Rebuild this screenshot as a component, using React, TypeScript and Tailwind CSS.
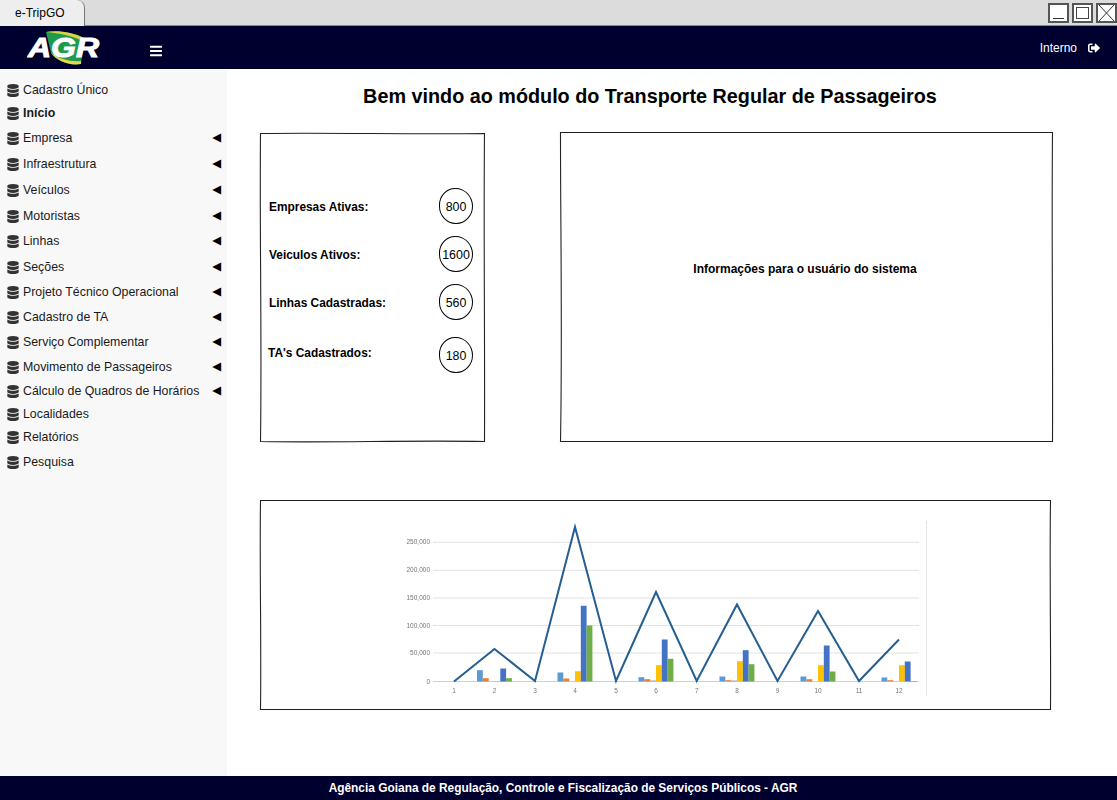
import { FaBars, FaDatabase, FaSignOutAlt } from 'react-icons/fa';

const menuItems = [
    { label: 'Cadastro Único', row: 'h-[22px]' },
    { label: 'Início', row: 'h-[24px] font-bold' },
    { label: 'Empresa', row: 'h-[26px]', arrow: true },
    { label: 'Infraestrutura', row: 'h-[26px]', arrow: true },
    { label: 'Veículos', row: 'h-[26px]', arrow: true },
    { label: 'Motoristas', row: 'h-[26px]', arrow: true },
    { label: 'Linhas', row: 'h-[24px]', arrow: true },
    { label: 'Seções', row: 'h-[28px]', arrow: true },
    { label: 'Projeto Técnico Operacional', row: 'h-[22px]', arrow: true },
    { label: 'Cadastro de TA', row: 'h-[28px]', arrow: true },
    { label: 'Serviço Complementar', row: 'h-[22px]', arrow: true },
    { label: 'Movimento de Passageiros', row: 'h-[28px]', arrow: true },
    { label: 'Cálculo de Quadros de Horários', row: 'h-[20px]', arrow: true },
    { label: 'Localidades', row: 'h-[26px]' },
    { label: 'Relatórios', row: 'h-[20px]' },
    { label: 'Pesquisa', row: 'h-[30px]' },
];

const stats = [
    { label: 'Empresas Ativas:', value: '800', row: 'mt-0 pl-[9px]', text: 'mt-[3px]' },
    { label: 'Veiculos Ativos:', value: '1600', row: 'mt-[12px] pl-[9px]', text: 'mt-[3px]' },
    { label: 'Linhas Cadastradas:', value: '560', row: 'mt-[12px] pl-[9px]', text: 'mt-[3px]' },
    { label: "TA's Cadastrados:", value: '180', row: 'mt-[17px] pl-[8px]', text: '-mt-[2px]' },
];

const seriesColors = ['#5b9bd5', '#ed7d31', '#a5a5a5', '#ffc000', '#4472c4', '#70ad47'];
const seriesOffsets = [-17.5, -11.6, -5.8, 0, 5.8, 11.6];

// bar heights in px per month, same order as seriesColors
const bars = [
    { x: 494.5, h: [11.3, 3.3, 0, 0.5, 13, 3.3] },
    { x: 575, h: [9, 3, 0, 10.3, 75.7, 56] },
    { x: 656, h: [4.3, 2.3, 1, 16.3, 42, 22.7] },
    { x: 737, h: [5, 1.3, 1, 20.3, 31.3, 17.3] },
    { x: 818, h: [5, 2.3, 0, 16.3, 36, 10] },
    { x: 899, h: [4, 1.3, 0, 16.3, 20, 0.5] },
];

const months = [454, 494.5, 535, 575, 616, 656, 696.7, 737, 777.5, 818, 859, 899];
const ticks = [
    { y: 542.3, label: '250,000' },
    { y: 570.3, label: '200,000' },
    { y: 598, label: '150,000' },
    { y: 625.5, label: '100,000' },
    { y: 653, label: '50,000' },
    { y: 681.5, label: '0' },
];
const linePoints = '454,681.5 494.5,649 535,681 575,527 616,681 656,592 696.7,681 737,604.5 777.5,681 818,611 859,681 899,639.5';

function SketchBorder({ d }: { d: string }) {
    return (
        <svg className="absolute inset-0 w-full h-full pointer-events-none overflow-visible" fill="none">
            <path d={d} stroke="#222" strokeWidth="1.1" />
        </svg>
    );
}

function Logo() {
    return (
        <svg width="76" height="38" viewBox="0 0 76 38" className="ml-[27px] mt-[1px]">
            <path d="M19 3 C30 1 46 3 57 9 L54 35 C42 37 30 32 24 24 Z" fill="#1f9a4c" />
            <path d="M19 3 C30 1 46 3 57 9 L56 12 C46 7 32 4 19 3 Z" fill="#d8d24a" />
            <path d="M24 24 C30 32 42 37 54 35 L54 32 C44 33 32 30 24 24 Z" fill="#e6d84a" />
            <text x="1" y="28" fontFamily="'Liberation Sans', sans-serif" fontSize="27" fontWeight="700" fontStyle="italic" fill="#fff" stroke="#fff" strokeWidth="1" textLength="71" lengthAdjust="spacingAndGlyphs">AGR</text>
        </svg>
    );
}

function Chart() {
    return (
        <svg width="540" height="190" viewBox="395 515 540 190" className="blur-[0.3px]">
            <line x1="926.5" y1="521" x2="926.5" y2="696" stroke="#e4e4e4" />
            {ticks.map((t) => (
                <g key={t.label}>
                    <line x1="433" y1={t.y} x2="919" y2={t.y} stroke={t.label === '0' ? '#d0d0d0' : '#e2e2e2'} />
                    <text x="430" y={t.y + 2} textAnchor="end" fontSize="6.5" fill="#777" fontFamily="'Liberation Sans', sans-serif">{t.label}</text>
                </g>
            ))}
            {months.map((x, i) => (
                <text key={x} x={x} y="692.5" textAnchor="middle" fontSize="6.5" fill="#777" fontFamily="'Liberation Sans', sans-serif">{i + 1}</text>
            ))}
            {bars.map((m) =>
                m.h.map((h, i) => (
                    <rect key={`${m.x}-${i}`} x={m.x + seriesOffsets[i]} y={681.5 - h} width="5.8" height={h} fill={seriesColors[i]} />
                ))
            )}
            <polyline points={linePoints} fill="none" stroke="#255e91" strokeWidth="2" />
        </svg>
    );
}

export default function App() {
    return (
        <div className="w-[1117px] h-[800px] flex flex-col bg-white overflow-hidden font-['Liberation_Sans',Arial,sans-serif] text-black">
            {/* window title bar */}
            <div className="h-[26px] shrink-0 flex justify-between bg-[#dcdcdc] border-b border-[#8a8a8a]">
                <div className="w-[85px] h-[26px] bg-[#eeeeee] border-r border-[#777] rounded-tr-[8px] text-[12px] leading-[27px] pl-[15px]">e-TripGO</div>
                <div className="flex gap-[3px] pt-[3px]">
                    <button className="w-[21px] h-[20px] bg-white border-2 border-[#555] flex items-center justify-center">
                        <span className="w-[11px] h-[1px] bg-[#333] mt-[11px]" />
                    </button>
                    <button className="w-[21px] h-[20px] bg-white border-2 border-[#555] flex items-center justify-center">
                        <span className="w-[13px] h-[12px] border border-[#444]" />
                    </button>
                    <button className="w-[21px] h-[20px] bg-white border-2 border-[#555] flex items-center justify-center">
                        <svg width="17" height="16" viewBox="0 0 17 16" stroke="#333" strokeWidth="1">
                            <path d="M1 0 L16 16 M16 0 L1 16" />
                        </svg>
                    </button>
                </div>
            </div>

            {/* header */}
            <header className="h-[43px] shrink-0 flex items-center bg-[#00002e] text-white">
                <Logo />
                <FaBars className="ml-[47px] w-[12px] h-[14px] mt-[7px]" />
                <div className="ml-auto flex items-center pr-[17px] mt-[1px] text-[12px]">
                    <span>Interno</span>
                    <FaSignOutAlt className="ml-[11px] w-[12px] h-[12px]" />
                </div>
            </header>

            <div className="flex-1 flex min-h-0">
                {/* sidebar */}
                <nav className="w-[227px] shrink-0 mt-[1px] pt-[9px] bg-[#f8f8f8] text-[12.35px]">
                    {menuItems.map((item) => (
                        <div key={item.label} className={`flex items-center pl-[7px] pr-[6px] ${item.row}`}>
                            <FaDatabase className="w-[12px] h-[13px] text-[#333] shrink-0" />
                            <span className="ml-[4px] text-[#1a1a1a]">{item.label}</span>
                            {item.arrow && <span className="ml-auto text-[11.5px] leading-none font-['DejaVu_Sans',sans-serif]">◀</span>}
                        </div>
                    ))}
                </nav>

                {/* main content */}
                <main className="flex-1 pl-[33px]">
                    <h1 className="w-[780px] mt-[15px] h-[24px] text-center text-[19.8px] leading-[24px] font-bold">
                        Bem vindo ao módulo do Transporte Regular de Passageiros
                    </h1>

                    <div className="flex items-start mt-[24px]">
                        <section className="relative w-[225px] h-[309px] mt-[1px] pt-[55px]">
                            <SketchBorder d="M.5 .5 C70 -.5 150 1.5 224.5 .5 C223.5 100 225 200 224.5 308.5 C150 307 70 310 .5 308.5 C2 200 -.5 100 .5 .5 Z" />
                            {stats.map((s) => (
                                <div key={s.label} className={`flex items-center justify-between pr-[12px] ${s.row}`}>
                                    <span className={`text-[11.9px] font-bold ${s.text}`}>{s.label}</span>
                                    <span className="w-[34px] h-[36px] rounded-[48%_52%_50%_50%] border border-black flex items-center justify-center pt-[2px] text-[12.4px]">{s.value}</span>
                                </div>
                            ))}
                        </section>

                        <section className="relative ml-[75px] w-[493px] h-[310px] flex items-center justify-center pb-[36px] pr-[3px] text-[12px] font-bold">
                            <SketchBorder d="M.5 .5 C150 1.5 320 -.5 492.5 .5 C491.5 100 493 200 492.5 309.5 C320 308.5 150 310.5 .5 309.5 C2.5 200 .5 100 .5 .5 Z" />
                            Informações para o usuário do sistema
                        </section>
                    </div>

                    <section className="relative w-[791px] h-[210px] mt-[58px] pl-[135px] pt-[15px]">
                        <SketchBorder d="M.5 .5 C250 1.5 520 -.5 790.5 .5 C789.5 70 791 140 790.5 209.5 C520 208.5 250 210.5 .5 209.5 C1.5 140 -.5 70 .5 .5 Z" />
                        <Chart />
                    </section>
                </main>
            </div>

            {/* footer */}
            <footer className="h-[24px] shrink-0 bg-[#00002e] text-white text-[11.9px] font-bold text-center leading-[25px] pl-[9px]">
                Agência Goiana de Regulação, Controle e Fiscalização de Serviços Públicos - AGR
            </footer>
        </div>
    );
}
